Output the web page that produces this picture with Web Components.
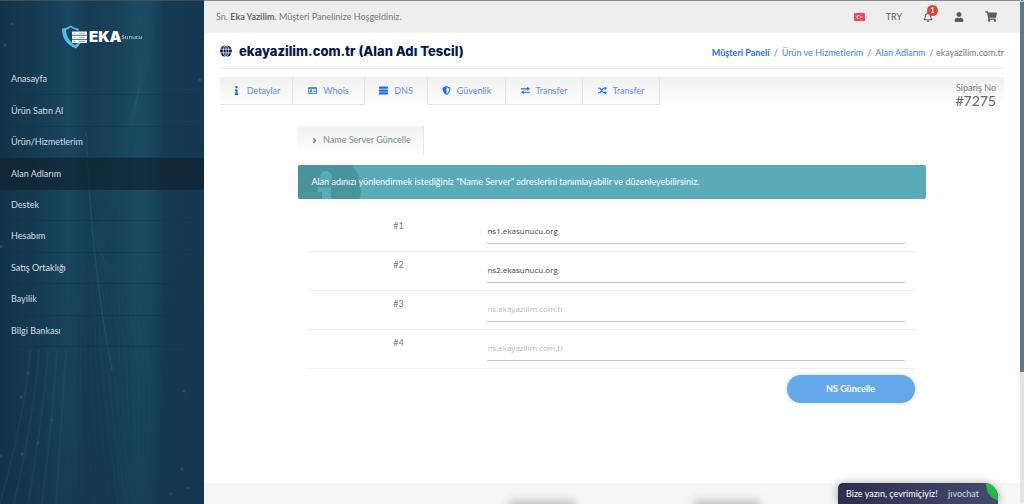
<!DOCTYPE html>
<html lang="tr">
<head>
<meta charset="utf-8">
<title>Müşteri Paneli</title>
<style>
html,body{margin:0;height:100%}
body{overflow:hidden;background:#fff;color:#777;font:9px/12px Lato,"Open Sans",sans-serif}
</style>
</head>
<body>
<client-panel></client-panel>
<script>
const ICONS={
 info:['0 0 192 512','<path d="M20 424.229h20V279.771H20c-11.046 0-20-8.954-20-20V212c0-11.046 8.954-20 20-20h112c11.046 0 20 8.954 20 20v212.229h20c11.046 0 20 8.954 20 20V492c0 11.046-8.954 20-20 20H20c-11.046 0-20-8.954-20-20v-47.771c0-11.046 8.954-20 20-20zM96 0C56.235 0 24 32.235 24 72s32.235 72 72 72 72-32.235 72-72S135.764 0 96 0z"/>'],
 card:['0 0 18 16','<path fill-rule="evenodd" d="M1.500 1.500h15q1.500 0 1.500 1.500v10q0 1.500-1.500 1.500h-15Q0 14.500 0 13V3q0-1.500 1.500-1.500zM1.500 4.500v8.500h15V4.500z"/><circle cx="6" cy="7.500" r="1.800"/><path d="M2.800 12q0-2.300 3.200-2.300T9.200 12zM11 6.300h4.500v1.400H11zM11 9h4.500v1.400H11z"/>'],
 server:['0 0 16 16','<rect y="1" width="16" height="4" rx="1"/><rect y="6" width="16" height="4" rx="1"/><rect y="11" width="16" height="4" rx="1"/>'],
 shield:['0 0 16 16','<path fill-rule="evenodd" d="M8 0l6.500 2.700q.5.300.5.900C15 10 12 14.500 8 16 4 14.500 1 10 1 3.600q0-.6.5-.9zM8 2.200v11.600c3-1.400 5-4.800 5-9.500z"/>'],
 exchange:['0 0 16 16','<path d="M0 4h11V1.500L16 5l-5 3.500V6H0zM16 10v2H5v2.500L0 11l5-3.500V10z"/>'],
 random:['0 0 16 16','<path fill="none" stroke="currentColor" stroke-width="2" d="M0 4h3.500l6 8H13M0 12h3.500l6-8H13"/><path d="M12 .8L16 4l-4 3.200zM12 8.800l4 3.200-4 3.200z"/>'],
 globe:['0 0 16 16','<circle cx="8" cy="8" r="7.800"/><path stroke="#fff" stroke-width="1" fill="none" d="M0 5.500h16M0 10.500h16M8 0v16"/><ellipse cx="8" cy="8" rx="3.600" ry="7.800" stroke="#fff" fill="none"/>'],
 angle:['0 0 10 16','<path d="M2 4l4 4-4 4" fill="none" stroke="currentColor" stroke-width="2.400"/>'],
 bell:['0 0 448 512','<path d="M439.390 362.290c-19.320-20.760-55.470-51.990-55.470-154.290 0-77.700-54.480-139.900-127.940-155.160V32c0-17.670-14.320-32-31.980-32s-31.980 14.330-31.980 32v20.840C118.560 68.100 64.080 130.300 64.080 208c0 102.300-36.150 133.530-55.470 154.290-6 6.450-8.660 14.160-8.610 21.710.11 16.400 12.980 32 32.100 32h383.800c19.120 0 32-15.600 32.100-32 .05-7.550-2.610-15.270-8.610-21.710zM67.530 368c21.220-27.970 44.420-74.330 44.530-159.420 0-.2-.06-.38-.06-.58 0-61.860 50.140-112 112-112s112 50.140 112 112c0 .2-.06.38-.06.58.11 85.100 23.310 131.460 44.530 159.420H67.530zM224 512c35.320 0 63.970-28.650 63.970-64H160.030c0 35.350 28.650 64 63.970 64z"/>'],
 user:['0 0 448 512','<path d="M224 256c70.700 0 128-57.300 128-128S294.700 0 224 0 96 57.300 96 128s57.300 128 128 128zm89.600 32h-16.700c-22.200 10.200-46.900 16-72.900 16s-50.600-5.800-72.900-16h-16.700C60.200 288 0 348.200 0 422.400V464c0 26.500 21.500 48 48 48h352c26.500 0 48-21.500 48-48v-41.600c0-74.200-60.200-134.400-134.400-134.400z"/>'],
 cart:['0 0 576 512','<path d="M528.120 301.319l47.273-208C578.806 78.301 567.391 64 551.990 64H159.208l-9.166-44.810C147.758 8.021 137.930 0 126.529 0H24C10.745 0 0 10.745 0 24v16c0 13.255 10.745 24 24 24h69.883l70.248 343.435C147.325 417.100 136 435.222 136 456c0 30.928 25.072 56 56 56s56-25.072 56-56c0-15.674-6.447-29.835-16.824-40h209.647C430.447 426.165 424 440.326 424 456c0 30.928 25.072 56 56 56s56-25.072 56-56c0-22.172-12.888-41.332-31.579-50.405l5.517-24.276c3.413-15.018-8.002-29.319-23.403-29.319H218.117l-6.545-32h293.145c11.206 0 20.920-7.754 23.403-18.681z"/>'],
 flag:['0 0 22 16','<rect width="22" height="16" rx="1" fill="#f8485e"/><circle cx="9" cy="8" r="4" fill="#fff"/><circle cx="10.200" cy="8" r="3.100" fill="#f8485e"/><path fill="#fff" d="M14 5.800l.6 1.500 1.600.1-1.300 1 .5 1.600-1.400-.9-1.400.9.500-1.600-1.300-1 1.600-.1z"/>']
};
function define(name,css,html,setup){
 const t=document.createElement('template');
 t.innerHTML='<style>*{box-sizing:border-box}a{color:inherit;text-decoration:none}'+css+'</style>'+html;
 customElements.define(name,class extends HTMLElement{
  constructor(){super();this.attachShadow({mode:'open'}).append(t.content.cloneNode(true));}
  connectedCallback(){if(setup)setup(this,this.shadowRoot);}
 });
}
define('ui-icon',':host{display:inline-flex;width:10px;height:10px;flex:none}svg{width:100%;height:100%;fill:currentColor;display:block}','<svg aria-hidden="true"></svg>',(h,r)=>{
 const icon=ICONS[h.getAttribute('name')],s=r.querySelector('svg');
 if(!icon)return;
 s.setAttribute('viewBox',icon[0]);s.innerHTML=icon[1];
});
define('brand-logo',`:host{display:block;padding:24px 60px 0 62px}
a{display:flex;align-items:center;height:24px;color:#fff}
svg{width:26px;height:24px;flex:none}
b{font:900 15px/14px Inter,sans-serif;margin-left:1px}
span{font:6px/8px "Open Sans",sans-serif;opacity:.85}`,
`<a href="#"><svg viewBox="0 0 26 24" aria-hidden="true"><path fill="#4fbcf0" d="M0 3.500Q5 3.500 8.500.5 12 3 16.500 3.500l.5 2h-1.600Q11.500 4.200 8.500 2.200 6.500 4.500 4 5q.2 9.500 10.500 16.500l-.7 2Q-.5 17.500 0 3.500z"/><path fill="#4fbcf0" d="M12 20.500L16 18h2.500q-1.500 3.300-4.700 5.500z"/><g fill="#fff"><rect x="10" y="6.500" width="15" height="3.300"/><rect x="10" y="10.600" width="15" height="3.300"/><rect x="10" y="14.700" width="15" height="3.300"/></g><path stroke="#54788f" stroke-width=".6" d="M11.500 8.200h2M17 8.200h6M11.500 12.300h2M17 12.300h6M11.500 16.400h2M17 16.400h6"/></svg><b>EKA</b><span>Sunucu</span></a>`);
define('side-link',`:host{display:flex}
a{flex:1;display:flex;align-items:center;padding-left:11px;color:#d5dde2;border-bottom:1px solid #112f4466}
:host([active]) a{background:#0e222fb3}`,'<a href="#"><slot></slot></a>');
define('side-bar',`:host{display:block;position:relative;overflow:hidden;background:linear-gradient(transparent 50%,#10324a73),linear-gradient(90deg,#113349 0,#143a52 16%,#1a4660 34%,#163c54 43%,#184159 56%,#1b4a63 68%,#1a4760 74%,#153c56 80%,#153850 100%)}
.art{position:absolute;inset:0;width:100%;height:100%}
.in{position:relative}
nav{display:grid;grid-auto-rows:1fr;height:283px;margin-top:15px}`,
`<svg class="art" viewBox="0 0 204 504" preserveAspectRatio="none" aria-hidden="true"><path fill="none" stroke="#22658a" stroke-opacity=".4" stroke-width="1.500" d="M86 130Q92 270 112 370"/><g class="l" fill="none" stroke="#39809c" stroke-opacity=".08" stroke-width=".8"></g><g class="p" fill="#3a87a8" opacity=".3"></g></svg>
<div class="in"><brand-logo></brand-logo><nav><side-link>Anasayfa</side-link><side-link>Ürün Satın Al</side-link><side-link>Ürün/Hizmetlerim</side-link><side-link active>Alan Adlarım</side-link><side-link>Destek</side-link><side-link>Hesabım</side-link><side-link>Satış Ortaklığı</side-link><side-link>Bayilik</side-link><side-link>Bilgi Bankası</side-link></nav></div>`,(h,r)=>{
 let l='';
 for(let i=0;i<9;i++){
  l+=`<path d="M${122+i*4} 0Q${150+i} 70 ${128-i*2} 150T${100+i*2} 270T${118+i*3} 504"/>`;
  if(i<8)l+=`<path d="M${90+i} 225Q${66+i*6} 360 ${78+i*8} 504"/>`;
  if(i<5)l+=`<path stroke-opacity=".12" stroke-width="2" d="M${30+i*9} 350Q${26+i*9} 410 ${i*14} 504"/>`;
 }
 r.querySelector('.l').innerHTML=l;
 r.querySelector('.p').innerHTML=[[12,23],[5,44],[1,246],[28,373],[21,397],[22,454],[1,456],[38,443],[184,391],[182,469],[188,488],[171,494],[52,420],[200,79]].map(p=>`<circle cx="${p[0]}" cy="${p[1]}" r="1.500"/>`).join('');
});
define('top-bar',`:host{display:flex;align-items:center;height:33px;padding:0 23px 0 12px;background:#eee;border-top:1px solid #8c8a8c;border-bottom:1px solid #f6f6f6}
p{margin:0 auto 0 0}
b{color:#666}
.acts{display:flex;align-items:center;gap:21px}
a{display:flex;position:relative;color:#5c5c5c}
.badge{position:absolute;left:4px;top:-7px;width:11px;height:11px;border-radius:50%;background:#df4439;color:#fff;font:bold 7px/11px Lato,sans-serif;text-align:center}
.flag{width:11px;height:8px}.cart{width:12px;height:11px}`,
`<p>Sn. <b>Eka Yazilim</b>. Müşteri Panelinize Hoşgeldiniz.</p><div class="acts"><a href="#" aria-label="Dil"><ui-icon class="flag" name="flag"></ui-icon></a><a href="#">TRY</a><a href="#" aria-label="Bildirimler"><ui-icon name="bell"></ui-icon><span class="badge">1</span></a><a href="#" aria-label="Hesap"><ui-icon name="user"></ui-icon></a><a href="#" aria-label="Sepet"><ui-icon class="cart" name="cart"></ui-icon></a></div>`);
define('page-head',`:host{display:flex;align-items:center;justify-content:space-between;height:36px;border-bottom:1px solid #eee}
h1{display:flex;align-items:center;gap:7px;margin:0;color:#06154a;font:800 13px/16px Inter,sans-serif}
ui-icon{width:12px;height:12px}
nav{display:flex;gap:4px;padding-top:5px;color:#777}
a{color:#3f7bf5}
b{color:#1d6ef5}`,
`<h1><ui-icon name="globe"></ui-icon>ekayazilim.com.tr (Alan Adı Tescil)</h1><nav aria-label="Konum"><a href="#"><b>Müşteri Paneli</b></a><span>/</span><a href="#">Ürün ve Hizmetlerim</a><span>/</span><a href="#">Alan Adlarım</a><span>/ ekayazilim.com.tr</span></nav>`);
define('tab-link',`:host{display:flex;border:solid #e2e2e2;border-width:0 1px 1px 0}
:host([active]){border-bottom-color:transparent}
a{flex:1;display:flex;align-items:center;justify-content:center;gap:6px;color:#5f8bf8}
ui-icon{color:#1a6cf5;width:9px;height:9px}`,'<a href="#"><slot></slot></a>',(h,r)=>{
 const n=document.createElement('ui-icon');n.setAttribute('name',h.getAttribute('icon'));r.querySelector('a').prepend(n);
});
define('tab-strip',`:host{display:flex;justify-content:space-between;height:30px;margin-top:8px;background:linear-gradient(#f1f1f1,#fff)}
nav{display:grid;grid-template-columns:73px 72px 63px 78px 77px 77px;height:28px}
.no{text-align:right;padding:5px 8px 0 0;white-space:nowrap}
strong{display:block;font-weight:400;font-size:14px;line-height:14px;color:#666}`,
`<nav><tab-link icon="info">Detaylar</tab-link><tab-link icon="card">Whois</tab-link><tab-link icon="server" active>DNS</tab-link><tab-link icon="shield">Güvenlik</tab-link><tab-link icon="exchange">Transfer</tab-link><tab-link icon="random">Transfer</tab-link></nav><div class="no">Sipariş No<strong>#7275</strong></div>`);
define('info-note',`:host{display:flex;align-items:center;position:relative;overflow:hidden;height:34px;margin-top:11px;padding-left:13px;border-radius:2px;background:#5aaab8;color:#fff}
svg{position:absolute;left:0;top:0;width:64px;height:34px}
p{position:relative;margin:0;white-space:nowrap}`,
`<svg viewBox="0 0 64 34" aria-hidden="true"><path fill="#4a929c" d="M0 0h54q9 11 9 25 0 5-2 9H0z"/><path fill="#5aaab8" d="M22 12a6 6 0 1 1 12 0 6 6 0 0 1-12 0M20 22h13v12h-9v-7h-4z"/></svg><p><slot></slot></p>`);
define('ns-row',`:host{display:grid;grid-template-columns:178px 1fr;height:39px;padding-right:10px;border-bottom:1px solid #f0f0f0}
label{text-align:center;padding-top:7px}
input{align-self:end;height:25px;margin-bottom:7px;padding:0 0 2px;min-width:0;border:0;border-bottom:1px solid #c4c4c4;background:none;color:#444;font:8px/12px "Open Sans",sans-serif;outline:0;border-radius:0}
input::placeholder{color:#b8b8b8;opacity:1}`,'<label for="v"></label><input id="v" type="text">',(h,r)=>{
 r.querySelector('label').textContent=h.getAttribute('label');
 const i=r.querySelector('input');i.value=h.getAttribute('value')||'';i.placeholder='ns.ekayazilim.com.tr';
});
define('ns-form',`:host{display:block;width:80%;margin:19px auto 0}
h2{display:inline-flex;align-items:center;justify-content:center;gap:4px;width:126px;height:28px;margin:0;font:inherit;color:#6f8a92;background:linear-gradient(#f1f1f1,#fff);border-right:1px solid #e6e6e6;vertical-align:top}
h2 ui-icon{width:8px;height:9px}
form{padding:14px 11px 0}
.end{display:flex;justify-content:flex-end;padding-top:6px}
button{width:128px;height:28px;border:0;border-radius:14px;background:#64a8ea;color:#fff;font:bold 9px/12px Lato,sans-serif;box-shadow:0 0 4px #0003}`,
`<h2><ui-icon name="angle"></ui-icon>Name Server Güncelle</h2><info-note>Alan adınızı yönlendirmek istediğiniz "Name Server" adreslerini tanımlayabilir ve düzenleyebilirsiniz.</info-note><form><ns-row label="#1" value="ns1.ekasunucu.org"></ns-row><ns-row label="#2" value="ns2.ekasunucu.org"></ns-row><ns-row label="#3"></ns-row><ns-row label="#4"></ns-row><div class="end"><button type="button">NS Güncelle</button></div></form>`);
define('page-foot',`:host{display:block;flex:none;height:21px;overflow:hidden;background:#f6f6f6}
p{display:flex;justify-content:center;gap:2px;margin:0;padding-top:18px;font-size:8px}
i{width:66px;height:12px;background:#bbb;filter:blur(4px)}`,'<p><span>Copyright ©</span><i></i><span>Tüm Hakları Saklıdır. Powered By</span><i></i></p>');
define('chat-tab',`:host{position:absolute;right:26px;bottom:0;width:160px;height:21px}
button{display:flex;align-items:center;justify-content:space-between;width:100%;height:100%;border:0;padding:0 19px 0 8px;border-radius:5px 14px 0 0;background:linear-gradient(100deg,#2e2e4d,#434b6d);color:#fff;font:9px/12px Lato,sans-serif;box-shadow:0 0 8px #0005}
svg{position:absolute;right:0;top:0;width:12px;height:18px}
.j{color:#d6d9e4}`,`<button type="button"><span>Bize yazın, çevrimiçiyiz!</span><span class="j">jıvochat</span></button><svg viewBox="0 0 12 18" aria-hidden="true"><path fill="#1ebe3e" d="M0 0Q12 2 12 17.500Q0 14 0 0z"/></svg>`);
define('scroll-rail',':host{display:block;background:linear-gradient(#567b8e,#567b8e) no-repeat 0 1px/100% 370px #e4e4e4;border-top:1px solid #555;border-radius:2px}','');
define('client-panel',`:host{display:grid;grid-template-columns:204px minmax(0,1fr) 4px;height:100vh;position:relative;overflow:hidden}
main{display:flex;flex-direction:column;min-height:0}
.body{flex:1;min-height:0;padding:0 16px}
side-bar{border-top:1px solid #444f55}`,
'<side-bar></side-bar><main><top-bar></top-bar><div class="body"><page-head></page-head><tab-strip></tab-strip><ns-form></ns-form></div><page-foot></page-foot></main><scroll-rail></scroll-rail><chat-tab></chat-tab>');
</script>
</body>
</html>
